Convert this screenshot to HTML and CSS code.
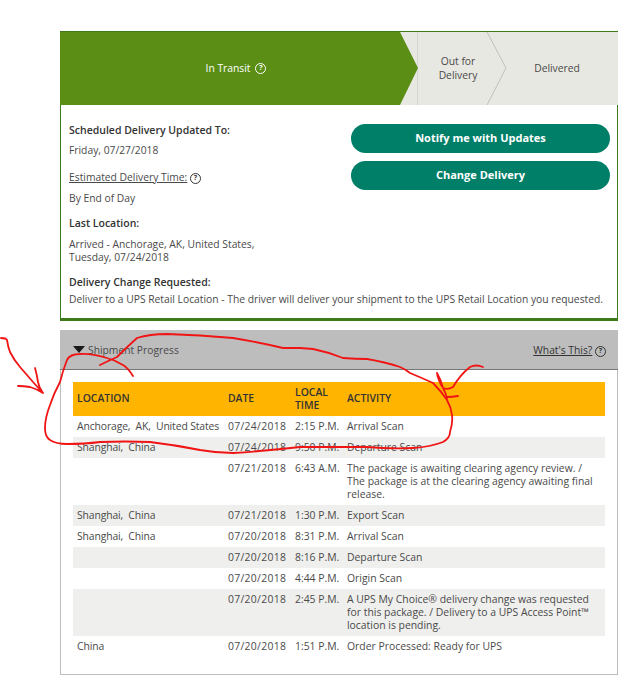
FILE: index.html
```html
<!DOCTYPE html>
<html lang="en">
<head>
  <meta charset="UTF-8" />
  <title>Shipment Tracking</title>
  <link rel="stylesheet" href="styles.css">
</head>
<body>

  <div class="summary">
    <div class="steps">
      <svg class="steps-bg" width="558" height="73" viewBox="0 0 558 73">
        <polygon points="340,0 340,73 558,73 558,0" fill="#e8e8e2"/>
        <line x1="357.500" y1="0" x2="357.500" y2="73" stroke="#d5d5cf"/>
        <polyline points="427,0 446,36 427,73" fill="none" stroke="#c4bfb9"/>
        <polygon points="0,0 340,0 358,36 340,73 0,73" fill="#5a8e15"/>
      </svg>
      <div class="step step-current">In Transit <span class="help help-light">?</span></div>
      <div class="step step-next">Out for<br>Delivery</div>
      <div class="step step-last">Delivered</div>
    </div>

    <div class="details">
      <div class="details-left">
        <p class="label">Scheduled Delivery Updated To:</p>
        <p class="value">Friday, 07/27/2018</p>
        <p class="link-label"><u>Estimated Delivery Time:</u> <span class="help">?</span></p>
        <p class="value value-time">By End of Day</p>
        <p class="label">Last Location:</p>
        <p class="value value-location">Arrived - Anchorage, AK, United States,<br>Tuesday, 07/24/2018</p>
      </div>
      <div class="btn-group">
        <button class="action-btn">Notify me with Updates</button>
        <button class="action-btn">Change Delivery</button>
      </div>
    </div>

    <div class="change-request">
      <p class="label">Delivery Change Requested:</p>
      <p class="change-text">Deliver to a UPS Retail Location - The driver will deliver your shipment to the UPS Retail Location you requested.</p>
    </div>
  </div>

  <div class="progress">
    <div class="progress-head">
      <div class="progress-title"><span class="triangle"></span>Shipment Progress</div>
      <div class="whats-this"><u>What's This?</u> <span class="help">?</span></div>
    </div>
    <div class="progress-body">
      <table>
        <thead>
          <tr>
            <th class="col-location">LOCATION</th>
            <th class="col-date">DATE</th>
            <th class="col-time">LOCAL TIME</th>
            <th>ACTIVITY</th>
          </tr>
        </thead>
        <tbody>
          <tr><td>Anchorage,&nbsp; AK,&nbsp; United States</td><td>07/24/2018</td><td>2:15 P.M.</td><td>Arrival Scan</td></tr>
          <tr><td>Shanghai,&nbsp; China</td><td>07/24/2018</td><td>9:50 P.M.</td><td>Departure Scan</td></tr>
          <tr><td></td><td>07/21/2018</td><td>6:43 A.M.</td><td>The package is awaiting clearing agency review. / The package is at the clearing agency awaiting final release.</td></tr>
          <tr><td>Shanghai,&nbsp; China</td><td>07/21/2018</td><td>1:30 P.M.</td><td>Export Scan</td></tr>
          <tr><td>Shanghai,&nbsp; China</td><td>07/20/2018</td><td>8:31 P.M.</td><td>Arrival Scan</td></tr>
          <tr><td></td><td>07/20/2018</td><td>8:16 P.M.</td><td>Departure Scan</td></tr>
          <tr><td></td><td>07/20/2018</td><td>4:44 P.M.</td><td>Origin Scan</td></tr>
          <tr><td></td><td>07/20/2018</td><td>2:45 P.M.</td><td>A UPS My Choice® delivery change was requested for this package. / Delivery to a UPS Access Point™ location is pending.</td></tr>
          <tr><td>China</td><td>07/20/2018</td><td>1:51 P.M.</td><td>Order Processed: Ready for UPS</td></tr>
        </tbody>
      </table>
    </div>
  </div>

  <!-- red pen marks drawn over the page -->
  <svg class="scribble" width="626" height="688" viewBox="0 0 626 688" fill="none" stroke="#f01414" stroke-width="1.800" stroke-linecap="round" stroke-linejoin="round">
    <path d="M133 376 Q128 368 123 365 Q115 360 107 358 Q90 353 80 354 Q70 354 67 360 Q63 370 60 382 Q54 393 50 405 Q45 418 45 428 Q45 437 50 440 Q56 444 67 444 Q85 444 100 442 Q125 441 150 442 Q175 445 200 450 Q217 453 233 453 Q265 451 300 447 Q335 447 367 447 Q390 449 413 448 Q430 447 443 442 Q450 438 450 432 Q453 423 452 415 Q451 407 447 400 Q441 391 433 383 Q422 378 410 373 Q405 369 400 367 Q385 362 367 359 Q355 359 343 358 Q328 352 313 349 L300 348 Q290 348 283 348 Q258 342 233 338 Q200 335 167 334 Q150 334 137 338 Q127 347 117 357 Q108 361 100 365"/>
    <path d="M437 373 Q438 380 443 388 Q446 393 447 399 M437 373 Q441 380 443 388 Q448 390 453 387 Q460 375 470 367 Q476 364 483 367 M447 397 Q452 397 458 396"/>
    <path d="M1 338 Q6 338 7 340 Q8 347 10 352 Q14 360 20 367 Q27 375 33 382 L43 393 Q39 388 38 382 Q37 375 35 368 M43 393 Q37 389 30 387 Q24 386 18 386"/>
  </svg>

</body>
</html>
```

FILE: styles.css
```css
* {
  margin: 0;
  padding: 0;
  box-sizing: border-box;
}

body {
  position: relative;
  width: 626px;
  height: 688px;
  overflow: hidden;
  padding: 31px 8px 0 60px;
  background: #fff;
  font-family: "Open Sans", sans-serif;
  font-size: 10.300px;
  color: #4a4a4a;
}

.summary {
  border: 1px solid #3f7a1b;
  border-top: 0;
  border-bottom: 3px solid #3f7a1b;
  height: 290px;
}

.steps {
  position: relative;
  display: flex;
  height: 73px;
  margin: 0 -1px;
  border-top: 1px solid #3f7a1b;
  text-align: center;
}

.steps-bg {
  position: absolute;
  top: 0;
  left: 0;
}

.step {
  position: relative;
  display: flex;
  align-items: center;
  justify-content: center;
  line-height: 14px;
}

.step-current {
  width: 352px;
  color: #fff;
  gap: 5px;
}

.step-next {
  width: 92px;
}

.step-last {
  flex: 1;
  padding-right: 8px;
}

.help {
  display: inline-block;
  width: 11px;
  height: 11px;
  border: 1.500px solid #333;
  border-radius: 50%;
  font-size: 7px;
  font-weight: 700;
  line-height: 8px;
  text-align: center;
  vertical-align: 1px;
  color: #333;
}

.help-light {
  border-color: #fff;
  color: #fff;
}

.details {
  display: flex;
  justify-content: space-between;
  padding: 19px 7px 0 8px;
}

.label {
  font-size: 10.500px;
  font-weight: 600;
  color: #333;
  line-height: 14px;
}

.value {
  line-height: 13px;
  margin-top: 7px;
  margin-bottom: 12px;
}

.link-label {
  margin-top: 13px;
  line-height: 14px;
}

.value-time {
  margin-top: 8px;
  margin-bottom: 11px;
}

.value-location {
  margin-top: 8px;
  margin-bottom: 11px;
}

.btn-group {
  display: flex;
  flex-direction: column;
  gap: 8px;
  margin-top: 1px;
}

.action-btn {
  width: 259px;
  height: 29px;
  padding-bottom: 2px;
  border: none;
  border-radius: 15px;
  background: #007f68;
  color: #fff;
  font-family: inherit;
  font-size: 11px;
  font-weight: 700;
}

.change-request {
  padding: 0 8px;
}

.change-text {
  line-height: 15px;
  margin-top: 3px;
}

.progress {
  height: 345px;
  margin-top: 9px;
  border: 1px solid #bdbdbd;
  border-top: 0;
}

.progress-head {
  display: flex;
  align-items: center;
  justify-content: space-between;
  height: 40px;
  margin: 0 -1px;
  padding: 0 12px 0 13px;
  background: #bdbdbd;
  border-bottom: 1px solid #777;
}

.progress-title {
  display: flex;
  align-items: center;
  gap: 3px;
}

.triangle {
  width: 0;
  height: 0;
  border-left: 6px solid transparent;
  border-right: 6px solid transparent;
  border-top: 7px solid #1a1a1a;
}

.whats-this {
  color: #333;
}

.progress-body {
  padding: 12px 12px 0 12px;
}

table {
  width: 100%;
  border-collapse: collapse;
  table-layout: fixed;
  font-size: 10.400px;
}

th {
  height: 34px;
  padding: 0 4px 1px;
  background: #ffb500;
  color: #333;
  font-weight: 600;
  line-height: 13px;
  text-align: left;
}

td {
  padding: 4px;
  line-height: 13px;
  vertical-align: top;
}

tbody tr:nth-child(even) td {
  background: #efefed;
}

td:nth-child(-n+3) {
  white-space: nowrap;
}

td:nth-child(1) {
  letter-spacing: -0.130px;
}

td:nth-child(2) {
  letter-spacing: 0.300px;
}

.col-location {
  width: 151px;
}

.col-date {
  width: 67px;
}

.col-time {
  width: 52px;
}

.scribble {
  position: absolute;
  top: 0;
  left: 0;
  pointer-events: none;
}
```
